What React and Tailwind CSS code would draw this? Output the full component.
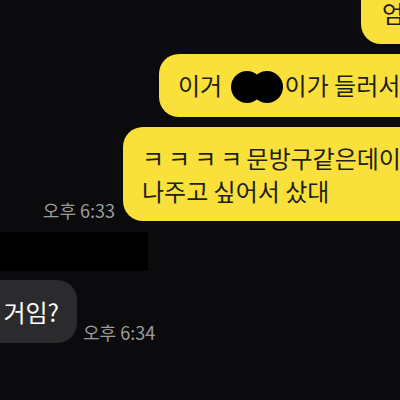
import React from 'react';

const FONT = { fontFamily: '"Noto Sans CJK KR", "Noto Sans", sans-serif' };

function Blob() {
  return (
    <svg width="52" height="32" viewBox="0 0 52 32" className="inline-block align-middle -mt-[3px] ml-[3px] mr-[2px]">
      <circle cx="16" cy="16" r="16" fill="#000" />
      <circle cx="36" cy="16" r="16" fill="#000" />
    </svg>
  );
}

export default function App() {
  return (
    <div
      className="w-[400px] h-[400px] overflow-hidden bg-[#0b0b0d] flex flex-col text-[24px] leading-[33px]"
      style={FONT}
    >
      {/* mine: cut off at top */}
      <div className="flex mt-[-19px]">
        <div className="ml-[361px] shrink-0 whitespace-nowrap bg-[#f9e03b] text-[#1e1e1e] rounded-[20px] pl-[21px] pr-[20px] py-[15px]">
          엄마가
        </div>
      </div>

      <div className="flex mt-[10px]">
        <div className="ml-[159px] shrink-0 whitespace-nowrap bg-[#f9e03b] text-[#1e1e1e] rounded-[20px] pl-[19px] pr-[20px] py-[14px]">
          이거 <Blob />이가 들러서 샀어
        </div>
      </div>

      <div className="flex items-end mt-[10px]">
        <div className="w-[123px] shrink-0 pr-[8px] text-right text-[18px] leading-[22px] text-[#9c9c9c]">
          오후 6:33
        </div>
        <div className="shrink-0 whitespace-nowrap bg-[#f9e03b] text-[#1e1e1e] rounded-[20px] pl-[19px] pr-[20px] py-[14px]">
          <div>
            <span className="tracking-[4px]">ㅋㅋㅋㅋ</span>문방구같은데이뻐서
          </div>
          <div>나주고 싶어서 샀대</div>
        </div>
      </div>

      {/* redacted name */}
      <div className="w-[148px] h-[39px] bg-black mt-[11px]" />

      <div className="flex items-end gap-[6px] mt-[9px]">
        <div className="w-[77px] shrink-0 h-[63px] bg-[#2b2b2d] rounded-r-[20px] text-white flex items-center justify-end pr-[18px] whitespace-nowrap overflow-hidden">
          거임?
        </div>
        <div className="text-[18px] leading-[22px] text-[#9c9c9c]">
          오후 6:34
        </div>
      </div>
    </div>
  );
}
